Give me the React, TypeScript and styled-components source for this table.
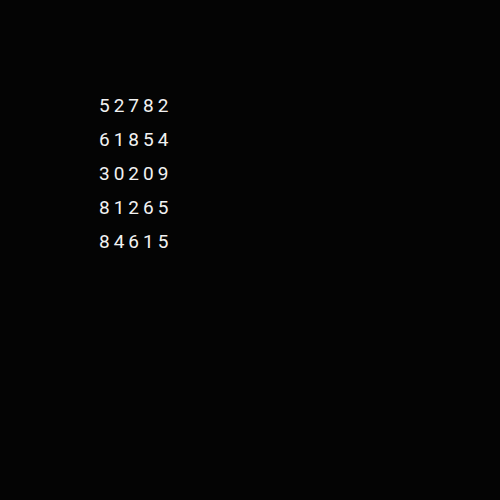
import React from "react";
import styled, { createGlobalStyle } from "styled-components";

const Global = createGlobalStyle`
  html, body { margin: 0; padding: 0; background: #040404; }
  #root { min-height: 500px; }
`;

const Page = styled.div`
  width: 500px;
  height: 500px;
  background: #040404;
  box-sizing: border-box;
  padding: 89px 0 0 99px;
  display: flex;
  flex-direction: column;
`;

const Row = styled.div`
  font-family: Roboto, "Noto Sans", sans-serif;
  font-size: 19px;
  line-height: 34px;
  letter-spacing: 4px;
  color: #f2f2f2;
`;

const rows = ["52782", "61854", "30209", "81265", "84615"];

export default function App() {
  return (
    <>
      <Global />
      <Page>
        {rows.map((r) => (
          <Row key={r}>{r}</Row>
        ))}
      </Page>
    </>
  );
}
